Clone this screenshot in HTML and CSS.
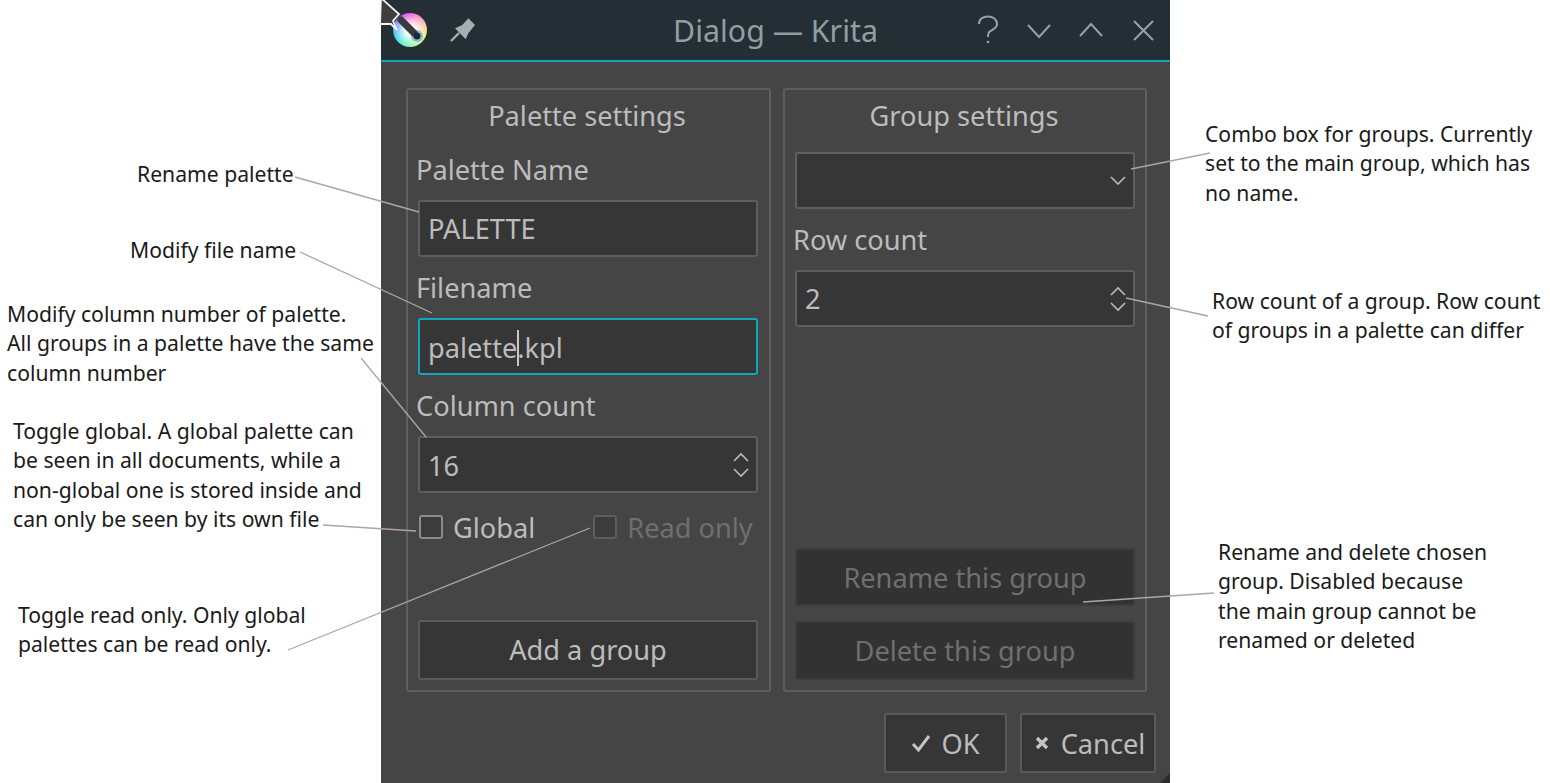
FILE: index.html
```html
<!DOCTYPE html>
<html lang="en">
<head>
    <meta charset="UTF-8">
    <meta name="viewport" content="width=device-width, initial-scale=1.0">
    <title>Dialog — Krita</title>
    <link rel="stylesheet" href="styles.css">
</head>
<body>
    <div class="dialog">
        <header class="titlebar">
            <div class="titlebar-left">
                <div class="app-icon">
                    <svg viewBox="0 0 34 34" width="34" height="34">
                        <circle cx="24" cy="23" r="6" fill="#5fa8e8" opacity="0.7"/>
                        <path d="M8 7 L21 20" stroke="#3a3a3a" stroke-width="7" stroke-linecap="round"/>
                        <circle cx="24" cy="23" r="3.5" fill="#1c2a33"/>
                    </svg>
                </div>
                <svg class="pin" viewBox="0 0 28 28" width="28" height="28">
                    <path d="M19.3 2.3 L26 9 L19.3 17.3 L16.7 23.3 L6 12.3 L13.3 9 Z" fill="#a5afb1"/>
                    <path d="M2 25 L10 17" stroke="#a5afb1" stroke-width="2.4"/>
                </svg>
            </div>
            <div class="window-title">Dialog — Krita</div>
            <div class="window-buttons">
                <svg class="help-btn" viewBox="0 0 22 30" width="22" height="30">
                    <path d="M2 9 C2 4 6 1.5 11 1.5 C16 1.5 20 4.5 20 9 C20 13 16 14.5 13.5 16 C11.5 17 11 18.5 11 22" class="win-stroke"/>
                    <circle cx="11" cy="27" r="1.3" fill="#93a3a6"/>
                </svg>
                <svg viewBox="0 0 26 26" width="26" height="26"><path d="M2 8 L13 20 L24 8" class="win-stroke"/></svg>
                <svg viewBox="0 0 26 26" width="26" height="26"><path d="M2 19 L13 7 L24 19" class="win-stroke"/></svg>
                <svg viewBox="0 0 26 26" width="26" height="26"><path d="M4 4 L23 23 M23 4 L4 23" class="win-stroke"/></svg>
            </div>
        </header>
        <div class="dialog-body">
            <div class="groups">
                <section class="group palette-group">
                    <h2 class="group-title">Palette settings</h2>
                    <div class="field-label">Palette Name</div>
                    <div class="input">PALETTE</div>
                    <div class="field-label">Filename</div>
                    <div class="input focused low-text">palette<span class="caret"></span>.kpl</div>
                    <div class="field-label">Column count</div>
                    <div class="input low-text">16
                        <svg class="spin-arrows" viewBox="0 0 18 26" width="18" height="26"><path d="M2 9 L9 2 L16 9 M2 17 L9 24 L16 17"/></svg>
                    </div>
                    <div class="check-row">
                        <label class="check"><span class="check-box"></span>Global</label>
                        <label class="check disabled"><span class="check-box"></span>Read only</label>
                    </div>
                    <div class="btn add-btn">Add a group</div>
                </section>
                <section class="group row-group">
                    <h2 class="group-title">Group settings</h2>
                    <div class="input combo">
                        <svg class="combo-arrow" viewBox="0 0 16 10" width="16" height="10"><path d="M1 2 L8 9 L15 2"/></svg>
                    </div>
                    <div class="field-label">Row count</div>
                    <div class="input">2
                        <svg class="spin-arrows" viewBox="0 0 18 26" width="18" height="26"><path d="M2 9 L9 2 L16 9 M2 17 L9 24 L16 17"/></svg>
                    </div>
                    <div class="btn disabled rename-btn">Rename this group</div>
                    <div class="btn disabled delete-btn">Delete this group</div>
                </section>
            </div>
            <div class="dialog-footer">
                <div class="btn ok-btn">
                    <svg viewBox="0 0 20 20" width="20" height="20"><path d="M2 11 L7.5 17 L18 3" class="btn-stroke"/></svg>
                    OK
                </div>
                <div class="btn cancel-btn">
                    <svg viewBox="0 0 14 14" width="14" height="14"><path d="M2 2 L12 12 M12 2 L2 12" class="btn-stroke heavy"/></svg>
                    Cancel
                </div>
            </div>
        </div>
        <div class="corner"></div>
    </div>

    <!-- annotations around the dialog -->
    <p class="note note-rename">Rename palette</p>
    <p class="note note-file">Modify file name</p>
    <p class="note note-column">Modify column number of palette.<br>All groups in a palette have the same<br>column number</p>
    <p class="note note-global">Toggle global. A global palette can<br>be seen in all documents, while a<br>non-global one is stored inside and<br>can only be seen by its own file</p>
    <p class="note note-readonly">Toggle read only. Only global<br>palettes can be read only.</p>
    <p class="note note-combo">Combo box for groups. Currently<br>set to the main group, which has<br>no name.</p>
    <p class="note note-row">Row count of a group. Row count<br>of groups in a palette can differ</p>
    <p class="note note-group">Rename and delete chosen<br>group. Disabled because<br>the main group cannot be<br>renamed or deleted</p>

    <svg class="leaders" viewBox="0 0 1550 783" width="1550" height="783">
        <path d="M295 177 L419 212"/>
        <path d="M300 252 L432 313"/>
        <path d="M361 358 L426 437"/>
        <path d="M323 525 L416 531"/>
        <path d="M288 650 L590 528"/>
        <path d="M1131 169 L1210 153"/>
        <path d="M1126 298 L1208 316"/>
        <path d="M1083 602 L1214 593"/>
        <path class="pointer" d="M381 -2 L399 14 L393 21 L397 30 L391 24 L380 24 Z"/>
    </svg>
</body>
</html>
```

FILE: styles.css
```css
* {
    box-sizing: border-box;
}
html, body {
    margin: 0;
    height: 783px;
    overflow: hidden;
    background: white;
}
body {
    position: relative;
    font-family: "Noto Sans", sans-serif;
}
.dialog {
    position: absolute;
    left: 381px;
    top: 0;
    width: 789px;
    height: 783px;
    background: #454545;
    color: #bcbcbc;
    font-size: 27.2px;
}
.titlebar {
    height: 62px;
    background: #232e35;
    border-bottom: 2px solid #12a5bd;
    display: flex;
    align-items: center;
    justify-content: space-between;
    position: relative;
    padding: 0 14px 0 12px;
}
.titlebar-left {
    display: flex;
    align-items: center;
    gap: 22px;
}
.app-icon {
    width: 34px;
    height: 34px;
    border-radius: 50%;
    background:
        radial-gradient(circle, rgba(255, 255, 255, 0.9) 0 22%, rgba(255, 255, 255, 0) 68%),
        conic-gradient(#f45fd8, #f8a0c0 12%, #f8f07a 30%, #c8f498 42%, #70f0c8 55%, #3cd4f0 68%, #6a9cf8 80%, #c860f0 92%, #f45fd8);
}
.window-title {
    position: absolute;
    left: 0;
    right: 0;
    text-align: center;
    color: #8f9fa2;
    font-size: 30.3px;
}
.window-buttons {
    display: flex;
    align-items: center;
    gap: 26px;
}
.help-btn {
    margin-right: 1px;
}
.win-stroke {
    fill: none;
    stroke: #93a3a6;
    stroke-width: 2;
}
.dialog-body {
    padding: 26px 23px 0 25px;
}
.groups {
    display: flex;
    gap: 12px;
}
.group {
    height: 604px;
    border: 2px solid #5e5e5e;
    border-radius: 3px;
    padding: 0 10px 10px 10px;
    display: flex;
    flex-direction: column;
}
.palette-group {
    width: 365px;
    padding-right: 11px;
}
.row-group {
    width: 364px;
}
.group-title {
    margin: 0;
    height: 50px;
    padding-right: 2px;
    display: flex;
    align-items: center;
    justify-content: center;
    font-size: 27.2px;
    font-weight: 400;
}
.field-label {
    height: 61px;
    padding-bottom: 1px;
    margin-left: -2px;
    display: flex;
    align-items: center;
}
.group-title + .field-label {
    height: 60px;
}
.input {
    height: 57px;
    flex: none;
    background: #363636;
    border: 2px solid #5e5e5e;
    border-radius: 3px;
    display: flex;
    align-items: center;
    padding-left: 8px;
    position: relative;
}
.input.focused {
    border-color: #12a5bd;
}
.input.low-text {
    padding-top: 2px;
}
.caret {
    display: inline-block;
    width: 2px;
    height: 36px;
    background: #c8c8c8;
    margin-right: -2px;
}
.spin-arrows {
    position: absolute;
    right: 6px;
    top: 14px;
}
.spin-arrows path, .combo-arrow path {
    fill: none;
    stroke: #bcbcbc;
    stroke-width: 1.6;
}
.combo {
    margin-top: 12px;
}
.combo-arrow {
    position: absolute;
    right: 7px;
    top: 21px;
}
.check-row {
    display: flex;
    margin-top: 16px;
    padding-left: 1px;
    gap: 58px;
    height: 36px;
    align-items: center;
}
.check {
    display: flex;
    align-items: center;
    gap: 10px;
}
.check-box {
    width: 24px;
    height: 24px;
    border: 2px solid #8c8c8c;
    border-radius: 3px;
    background: #3c3c3c;
}
.check.disabled {
    color: #6f6f6f;
}
.check.disabled .check-box {
    border-color: #5e5e5e;
}
.btn {
    display: flex;
    align-items: center;
    justify-content: center;
    height: 60px;
    background: #363636;
    border: 2px solid #5a5a5a;
    border-radius: 3px;
}
.btn.disabled {
    background: #323232;
    border-color: #3c3c3c;
    color: #6f6f6f;
}
.add-btn {
    margin-top: auto;
    padding-bottom: 2px;
}
.rename-btn {
    margin-top: auto;
    height: 58px;
}
.delete-btn {
    margin-top: 15px;
    height: 59px;
}
.dialog-footer {
    display: flex;
    justify-content: flex-end;
    gap: 13px;
    margin-top: 21px;
    margin-right: -9px;
}
.ok-btn {
    width: 123px;
    gap: 10px;
}
.cancel-btn {
    width: 136px;
    gap: 12px;
    padding-left: 4px;
}
.btn-stroke {
    fill: none;
    stroke: #c4c4c4;
    stroke-width: 3;
}
.btn-stroke.heavy {
    stroke-width: 3.5;
}
.corner {
    position: absolute;
    right: 0;
    bottom: 0;
    width: 0;
    height: 0;
    border-left: 10px solid transparent;
    border-bottom: 10px solid #232e35;
}
.note {
    position: absolute;
    margin: 0;
    font-size: 21.15px;
    line-height: 29.3px;
    color: #1a1a1a;
    white-space: nowrap;
}
.note-rename { left: 137px; top: 159px; }
.note-file { left: 130px; top: 235px; }
.note-column { left: 7px; top: 299px; }
.note-global { left: 13px; top: 416px; }
.note-readonly { left: 18px; top: 600px; }
.note-combo { left: 1205px; top: 119px; }
.note-row { left: 1212px; top: 286px; }
.note-group { left: 1218px; top: 537px; }
.leaders {
    position: absolute;
    left: 0;
    top: 0;
    pointer-events: none;
}
.leaders path {
    fill: none;
    stroke: #b3a49a;
    stroke-width: 1.3;
}
.leaders .pointer {
    fill: #3e3e3e;
    stroke: #f4f4f4;
    stroke-width: 1.8;
}
```
